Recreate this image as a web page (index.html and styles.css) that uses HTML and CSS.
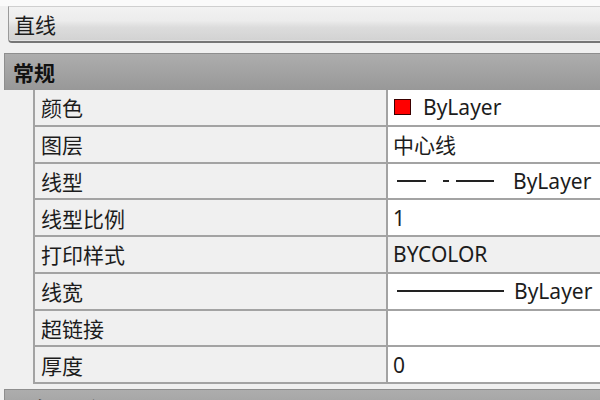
FILE: index.html
```html
<!DOCTYPE html>
<html lang="zh">
<head>
<meta charset="utf-8">
<link rel="stylesheet" href="styles.css">
</head>
<body>
<div class="topstrip"></div>
<div class="combo"><span class="cjk">直线</span></div>
<div class="section"><span class="cjk">常规</span></div>
<div class="grid">
  <div class="row">
    <div class="label">颜色</div>
    <div class="value"><span class="swatch"></span><span class="lat">ByLayer</span></div>
  </div>
  <div class="row">
    <div class="label">图层</div>
    <div class="value">中心线</div>
  </div>
  <div class="row">
    <div class="label">线型</div>
    <div class="value">
      <svg class="ltype" width="120" height="10" viewBox="0 0 120 10"><path d="M4 5H33M50 5H56M63 5H101" stroke="#222" stroke-width="2"/></svg><span class="lat">ByLayer</span>
    </div>
  </div>
  <div class="row">
    <div class="label">线型比例</div>
    <div class="value"><span class="lat">1</span></div>
  </div>
  <div class="row">
    <div class="label">打印样式</div>
    <div class="value grey"><span class="lat">BYCOLOR</span></div>
  </div>
  <div class="row">
    <div class="label">线宽</div>
    <div class="value">
      <svg class="lweight" width="121" height="10" viewBox="0 0 121 10"><path d="M4 5H111" stroke="#222" stroke-width="2"/></svg><span class="lat">ByLayer</span>
    </div>
  </div>
  <div class="row">
    <div class="label">超链接</div>
    <div class="value"></div>
  </div>
  <div class="row">
    <div class="label">厚度</div>
    <div class="value"><span class="lat">0</span></div>
  </div>
</div>
<div class="section next"><span class="cjk">几何图形</span></div>
</body>
</html>
```
FILE: styles.css
```css
html, body {
  margin: 0;
  padding: 0;
}
body {
  width: 600px;
  height: 400px;
  overflow: hidden;
  background: #f0f0f0;
  color: #1c1c1c;
  font-family: "Noto Sans", "Noto Sans CJK SC", sans-serif;
  font-size: 21px;
}
.cjk, .label, .value {
  font-family: "Noto Sans", "Noto Sans CJK SC", sans-serif;
}
.topstrip {
  height: 6px;
  background: #fafafa;
}
.combo {
  box-sizing: border-box;
  margin-left: 8px;
  height: 37px;
  border-top: 1px solid #cfcfcf;
  border-left: 1px solid #9a9a9a;
  border-bottom: 2px solid #767676;
  border-bottom-left-radius: 4px;
  background: linear-gradient(#f2f2f2 0%, #ececec 40%, #dcdcdc 60%, #d2d2d2 100%);
  display: flex;
  align-items: center;
  padding-left: 5px;
  box-shadow: inset 0 -1px 0 #e4e4e4;
}
.section {
  box-sizing: border-box;
  margin-top: 10px;
  margin-left: 4px;
  height: 37px;
  border-top: 1px solid #8e8e8e;
  border-left: 1px solid #8e8e8e;
  background: linear-gradient(#adadad, #989898);
  display: flex;
  align-items: center;
  padding-left: 8px;
  font-weight: bold;
  color: #111;
}
.section.next {
  margin-top: 5px;
}
.grid {
  margin-left: 33px;
}
.row {
  box-sizing: border-box;
  height: 36.75px;
  display: grid;
  grid-template-columns: 355px 1fr;
  border-bottom: 2px solid #a3a3a3;
}
.label {
  box-sizing: border-box;
  border-left: 2px solid #a3a3a3;
  border-right: 2px solid #a3a3a3;
  background: #f0f0f0;
  padding-left: 6px;
  display: flex;
  align-items: center;
}
.value {
  background: #ffffff;
  padding-left: 5px;
  display: flex;
  align-items: center;
  white-space: nowrap;
}
.value.grey {
  background: #f0f0f0;
}
.lat {
  font-family: "Noto Sans", sans-serif;
  font-size: 21px;
}
.swatch {
  box-sizing: border-box;
  width: 17px;
  height: 16px;
  margin-left: 1px;
  margin-right: 12px;
  background: #ff0000;
  border: 1px solid #3a0000;
}
.ltype, .lweight {
  display: block;
  flex: none;
}
```
